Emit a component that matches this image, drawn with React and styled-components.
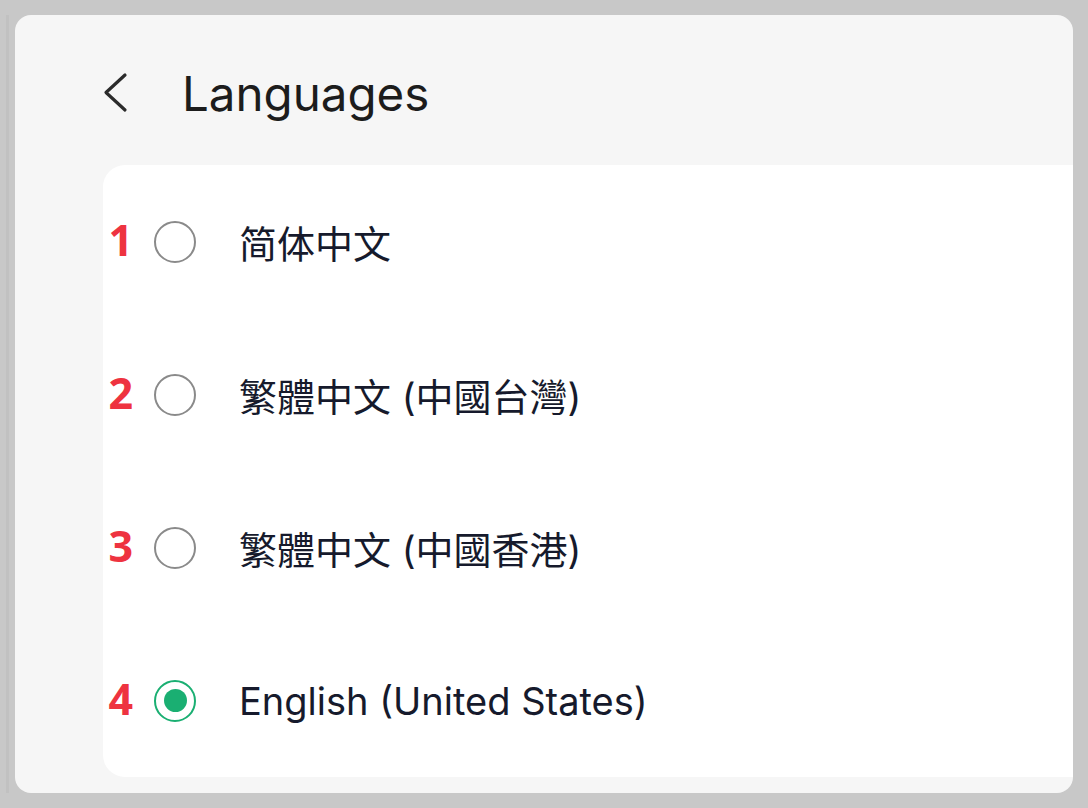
import React, { useState } from 'react';
import styled, { createGlobalStyle } from 'styled-components';

const GlobalStyle = createGlobalStyle`
  html, body {
    margin: 0;
    padding: 0;
    background: #c8c8c8;
  }
  body {
    font-family: Inter, "Noto Sans", "Noto Sans CJK SC", sans-serif;
  }
`;

const Stage = styled.div`
  display: flex;
  gap: 6px;
  width: 1088px;
  height: 808px;
  box-sizing: border-box;
  padding: 15px 15px 15px 6px;
`;

const Strip = styled.div`
  width: 3px;
  background: #c1c1c1;
`;

const Panel = styled.div`
  flex: 1;
  display: flex;
  flex-direction: column;
  background: #f6f6f6;
  border-radius: 16px;
  overflow: hidden;
`;

const Header = styled.div`
  height: 150px;
  display: flex;
  align-items: center;
  padding: 6px 0 0 88px;
  box-sizing: border-box;
`;

const BackButton = styled.button`
  display: flex;
  align-items: center;
  padding: 0;
  margin: 0 53px 0 0;
  border: 0;
  background: none;
  color: #2b2b2b;
  cursor: pointer;
`;

const Title = styled.h1`
  margin: 0;
  font-size: 47.5px;
  font-weight: 400;
  color: #1c1c1c;
  letter-spacing: 0;
`;

const Card = styled.div`
  height: 612px;
  margin-left: 88px;
  background: #ffffff;
  border-radius: 22px 0 0 22px;
  display: flex;
  flex-direction: column;
`;

const Row = styled.label`
  height: 153px;
  display: flex;
  align-items: center;
  cursor: pointer;
`;

const Num = styled.span`
  width: 30px;
  margin-top: -4px;
  text-align: right;
  font-family: "Noto Sans", Inter, sans-serif;
  font-size: 43px;
  font-weight: 700;
  color: #ee3340;
  line-height: 1;
`;

const Radio = styled.span`
  width: 42px;
  height: 42px;
  box-sizing: border-box;
  margin-left: 21px;
  border-radius: 50%;
  border: 2px solid ${(p) => (p.$checked ? '#1aaf72' : '#8a8a8a')};
  display: flex;
  align-items: center;
  justify-content: center;
  flex-shrink: 0;

  &::after {
    content: '';
    width: 23px;
    height: 23px;
    border-radius: 50%;
    background: ${(p) => (p.$checked ? '#1aaf72' : 'transparent')};
  }
`;

const Label = styled.span`
  margin-left: 43px;
  font-size: 38px;
  color: #161a2c;
  font-family: Inter, ${(p) => p.$cjk}, sans-serif;
`;

const languages = [
  { id: 'zh-CN', label: '简体中文', cjk: '"Noto Sans CJK SC"' },
  { id: 'zh-TW', label: '繁體中文 (中國台灣)', cjk: '"Noto Sans CJK TC"' },
  { id: 'zh-HK', label: '繁體中文 (中國香港)', cjk: '"Noto Sans CJK TC"' },
  { id: 'en-US', label: 'English (United States)', cjk: '"Noto Sans CJK SC"' },
];

const BackIcon = () => (
  <svg width="26" height="42" viewBox="0 0 26 42" fill="none">
    <path
      d="M22 3 L3 20.5 L22 38"
      stroke="currentColor"
      strokeWidth="3.2"
      strokeLinecap="round"
      strokeLinejoin="round"
    />
  </svg>
);

const App = () => {
  const [selected, setSelected] = useState('en-US');

  return (
    <>
      <GlobalStyle />
      <Stage>
        <Strip />
        <Panel>
          <Header>
            <BackButton aria-label="Back">
              <BackIcon />
            </BackButton>
            <Title>Languages</Title>
          </Header>
          <Card>
            {languages.map((lang, i) => (
              <Row key={lang.id} onClick={() => setSelected(lang.id)}>
                <Num>{i + 1}</Num>
                <Radio $checked={selected === lang.id} />
                <Label $cjk={lang.cjk}>{lang.label}</Label>
              </Row>
            ))}
          </Card>
        </Panel>
      </Stage>
    </>
  );
};

export default App;
